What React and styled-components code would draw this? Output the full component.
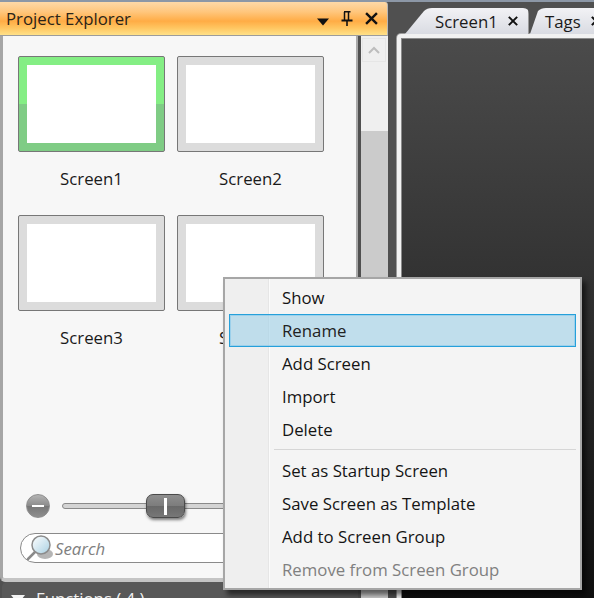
import React from 'react';
import styled, { createGlobalStyle } from 'styled-components';

const Global = createGlobalStyle`
  html, body {
    margin: 0;
    padding: 0;
    background: #505050;
    overflow: hidden;
  }
  * { box-sizing: border-box; }
`;

const screens = ['Screen1', 'Screen2', 'Screen3', 'Screen4'];

const menuGroups = [
  [
    { label: 'Show' },
    { label: 'Rename', active: true },
    { label: 'Add Screen' },
    { label: 'Import' },
    { label: 'Delete' },
  ],
  [
    { label: 'Set as Startup Screen' },
    { label: 'Save Screen as Template' },
    { label: 'Add to Screen Group' },
    { label: 'Remove from Screen Group', disabled: true },
  ],
];

const CaretIcon = () => (
  <svg width="12" height="8" viewBox="0 0 12 8">
    <path d="M0 0.5h12L6 7.5z" fill="#111" />
  </svg>
);

const PinIcon = () => (
  <svg width="12" height="15" viewBox="0 0 12 15" fill="none" stroke="#111">
    <path d="M3 .75h6.5" strokeWidth="1.5" />
    <path d="M3.5 1v8M7.5 1v8" strokeWidth="1.5" />
    <path d="M.5 9.5h11" strokeWidth="2" />
    <path d="M6 10v5" strokeWidth="1.6" />
  </svg>
);

const CloseIcon = ({ size = 12, weight = 2 }) => (
  <svg width={size} height={size} viewBox="0 0 12 12" fill="none" stroke="#111" strokeWidth={weight}>
    <path d="M1 1l10 10M11 1L1 11" />
  </svg>
);

const ChevronUp = () => (
  <svg width="12" height="8" viewBox="0 0 12 8" fill="none" stroke="#bdbdbd" strokeWidth="2">
    <path d="M1 7l5-5 5 5" />
  </svg>
);

const SearchGlass = () => (
  <svg width="28" height="30" viewBox="0 0 28 30">
    <defs>
      <linearGradient id="lens" x1="0" y1="0" x2="1" y2="1">
        <stop offset="0" stopColor="#ffffff" />
        <stop offset="1" stopColor="#a9d0e2" />
      </linearGradient>
    </defs>
    <ellipse cx="20" cy="21" rx="8" ry="5" fill="#b5b5b5" />
    <path d="M3 26L10 19" stroke="#8a8a8a" strokeWidth="2.5" strokeLinecap="round" />
    <circle cx="16" cy="12" r="9" fill="url(#lens)" stroke="#8c8c8c" strokeWidth="1.5" />
  </svg>
);

export default function App() {
  return (
    <Window>
      <Global />
      <Dock>
        <DockHeader>
          <DockTitle>Project Explorer</DockTitle>
          <DockActions>
            <CaretSlot><CaretIcon /></CaretSlot>
            <PinIcon />
            <CloseIcon size={13} weight={2.2} />
          </DockActions>
        </DockHeader>
        <DockBody>
          <PanelColumn>
            <Panel>
              <ScreenGrid>
                {screens.map((name, i) => (
                  <ScreenCard key={name}>
                    <Thumb $selected={i === 0}>
                      <ThumbPage />
                    </Thumb>
                    <ScreenName>{name}</ScreenName>
                  </ScreenCard>
                ))}
              </ScreenGrid>
              <Controls>
                <ZoomRow>
                  <ZoomButton><ZoomMinus /></ZoomButton>
                  <Track>
                    <Handle />
                  </Track>
                </ZoomRow>
                <SearchBox>
                  <SearchGlass />
                  <SearchInput>Search</SearchInput>
                </SearchBox>
              </Controls>
            </Panel>
            <FunctionsBar>
              <FunctionsArrow />
              <span>Functions ( 4 )</span>
            </FunctionsBar>
          </PanelColumn>
          <ScrollBar>
            <ScrollTrack>
              <ScrollUp><ChevronUp /></ScrollUp>
            </ScrollTrack>
            <ScrollThumb />
          </ScrollBar>
        </DockBody>
      </Dock>

      <Documents>
        <TabStrip>
          <Tab $slope={22} $pad={30} $width={124}>
            <span>Screen1</span>
            <CloseIcon size={10} weight={2.4} />
          </Tab>
          <Tab $slope={11} $pad={15} $width={100}>
            <span>Tags</span>
            <CloseIcon size={10} weight={2.4} />
          </Tab>
        </TabStrip>
        <Frame>
          <Canvas />
        </Frame>
      </Documents>

      <Menu>
        {menuGroups.map((group, g) => (
          <div key={g}>
            {g > 0 && <MenuSeparator />}
            {group.map((item) => (
              <MenuItem key={item.label} $active={item.active} $disabled={item.disabled}>
                {item.label}
              </MenuItem>
            ))}
          </div>
        ))}
      </Menu>
    </Window>
  );
}

const Window = styled.div`
  position: relative;
  display: flex;
  width: 594px;
  height: 598px;
  overflow: hidden;
  background: #505050;
  border-top: 2px solid #8c97a6;
  font-family: "Open Sans", "Noto Sans", sans-serif;
  font-size: 16.8px;
  color: #1a1a1a;
`;

const Dock = styled.div`
  display: flex;
  flex-direction: column;
  flex: 0 0 388px;
`;

const DockHeader = styled.div`
  display: flex;
  align-items: center;
  justify-content: space-between;
  flex: 0 0 34px;
  padding: 0 9px 0 6px;
  background: linear-gradient(#fed9a8 0%, #ffc67c 30%, #ffac45 58%, #ffc560 78%, #ffe188 100%);
  border-bottom: 1px solid #9c9c9c;
  border-right: 1px solid #b8b8b8;
  border-top-right-radius: 3px;
`;

const DockTitle = styled.div`
  color: #2b2418;
`;

const DockActions = styled.div`
  display: flex;
  align-items: center;
  gap: 12px;
`;

const CaretSlot = styled.span`
  display: flex;
  padding-top: 7px;
`;

const DockBody = styled.div`
  display: flex;
  flex: 1;
  min-height: 0;
`;

const PanelColumn = styled.div`
  display: flex;
  flex-direction: column;
  flex: 0 0 358px;
`;

const Panel = styled.div`
  display: flex;
  flex-direction: column;
  justify-content: space-between;
  flex: 0 0 546px;
  background: #f7f7f7;
  border-left: 3px solid #a6a6a6;
  border-right: 2px solid #aaaaaa;
  border-bottom: 4px solid #c4c4c4;
  border-bottom-left-radius: 5px;
  padding: 20px 0 15px 15px;
`;

const ScreenGrid = styled.div`
  display: grid;
  grid-template-columns: 147px 147px;
  grid-auto-rows: 147px;
  gap: 12px;
`;

const ScreenCard = styled.div`
  display: flex;
  flex-direction: column;
  align-items: center;
`;

const Thumb = styled.div`
  width: 147px;
  height: 96px;
  padding: 8px;
  border: 1px solid #777777;
  border-radius: 2px;
  background: ${(props) =>
    props.$selected ? 'linear-gradient(#84ee84 50%, #7fcc85 50%)' : '#dcdcdc'};
`;

const ThumbPage = styled.div`
  width: 100%;
  height: 100%;
  background: #ffffff;
`;

const ScreenName = styled.div`
  margin-top: 16px;
  line-height: 22px;
`;

const Controls = styled.div`
  display: flex;
  flex-direction: column;
  gap: 15px;
`;

const ZoomRow = styled.div`
  display: flex;
  align-items: center;
  gap: 12px;
  padding-left: 8px;
`;

const ZoomButton = styled.div`
  display: flex;
  align-items: center;
  justify-content: center;
  width: 24px;
  height: 24px;
  border-radius: 50%;
  border: 1px solid #8f8f8f;
  background: linear-gradient(#b4b4b4, #8a8a8a 50%, #777777 51%, #8e8e8e);
`;

const ZoomMinus = styled.span`
  width: 12px;
  height: 2px;
  background: #ffffff;
`;

const Track = styled.div`
  position: relative;
  width: 278px;
  height: 6px;
  border: 1px solid #8a8a8a;
  border-radius: 3px;
  background: #d4d4d4;
`;

const Handle = styled.div`
  position: absolute;
  left: 83px;
  top: -10px;
  width: 39px;
  height: 24px;
  border: 1px solid #4a4a4a;
  border-radius: 7px;
  background: linear-gradient(#8e8e8e, #7c7c7c 50%, #686868 51%, #777777);
  box-shadow: 1px 2px 3px rgba(0, 0, 0, 0.5);

  &::after {
    content: '';
    position: absolute;
    left: 17px;
    top: 3px;
    width: 3px;
    height: 17px;
    background: #ffffff;
  }
`;

const SearchBox = styled.div`
  display: flex;
  align-items: center;
  gap: 2px;
  width: 320px;
  height: 30px;
  margin-left: 2px;
  padding-left: 4px;
  border: 1px solid #8a8a8a;
  border-radius: 15px;
  background: #ffffff;
`;

const SearchInput = styled.span`
  font-style: italic;
  color: #808080;
`;

const FunctionsBar = styled.div`
  display: flex;
  align-items: flex-start;
  gap: 11px;
  flex: 0 0 40px;
  margin-left: 2px;
  padding: 5px 0 0 9px;
  background: #585858;
  border-top-left-radius: 5px;
  color: #f0f0f0;
`;

const FunctionsArrow = styled.span`
  width: 14px;
  height: 9px;
  margin-top: 8px;
  background: #f4f4f4;
  clip-path: polygon(0 0, 100% 0, 50% 100%);
`;

const ScrollBar = styled.div`
  display: flex;
  flex-direction: column;
  width: 27px;
  margin-left: 3px;
`;

const ScrollTrack = styled.div`
  flex: 0 0 95px;
  padding: 2px 2px 0 1px;
  background: #efefef;
`;

const ScrollUp = styled.div`
  display: flex;
  align-items: center;
  justify-content: center;
  height: 24px;
  border: 1px solid #e6e6e6;
`;

const ScrollThumb = styled.div`
  flex: 1;
  background: #cbcbcb;
`;

const Documents = styled.div`
  display: flex;
  flex-direction: column;
  flex: 1;
  min-width: 0;
  padding-top: 6px;
`;

const TabStrip = styled.div`
  display: flex;
  flex: 0 0 26px;
  gap: 1px;
  padding-left: 17px;
`;

const Tab = styled.div`
  display: flex;
  flex: 0 0 ${(props) => props.$width}px;
  align-items: center;
  gap: 10px;
  height: 26px;
  padding-left: ${(props) => props.$pad}px;
  background: linear-gradient(#f2f2f5, #d9dbe2);
  border-right: 1px solid #9a9a9a;
  clip-path: path("M0 26L${(props) => props.$slope - 3} 3Q${(props) => props.$slope} 0 ${(props) => props.$slope + 5} 0L${(props) => props.$width - 6} 0Q${(props) => props.$width} 0 ${(props) => props.$width} 6L${(props) => props.$width} 26Z");
`;

const Frame = styled.div`
  flex: 1;
  margin-left: 9px;
  padding: 4px 0 0 4px;
  background: #f1f1f1;
  border-top-left-radius: 4px;
  box-shadow: 0 0 0 1px #9a9a9a;
`;

const Canvas = styled.div`
  height: 100%;
  background: linear-gradient(#4b4b4b, #333333 42%, #0f0f0f);
  border-top: 1px solid #8a8a8a;
  border-left: 1px solid #8a8a8a;
`;

const Menu = styled.div`
  position: absolute;
  left: 223px;
  top: 275px;
  width: 359px;
  height: 313px;
  padding: 2px 4px 2px 4px;
  border: 2px solid #a6a6a6;
  background: linear-gradient(90deg, #efefef 43px, #e6e6e6 43px, #e6e6e6 44px, #fbfbfb 44px, #fbfbfb 45px, #f4f4f4 45px);
  box-shadow: 4px 5px 5px rgba(0, 0, 0, 0.55);
`;

const MenuItem = styled.div`
  display: flex;
  align-items: center;
  height: 33px;
  padding-left: 53px;
  color: ${(props) => (props.$disabled ? '#808080' : '#141414')};
  ${(props) =>
    props.$active &&
    `
      background: rgba(164, 210, 232, 0.65);
      box-shadow: inset 0 0 0 1px #26a0da, inset 0 0 0 2px rgba(120, 195, 235, 0.5);
      color: #222;
    `}
`;

const MenuSeparator = styled.div`
  height: 1px;
  margin: 3px 0 4px 45px;
  background: #d6d6d6;
`;
